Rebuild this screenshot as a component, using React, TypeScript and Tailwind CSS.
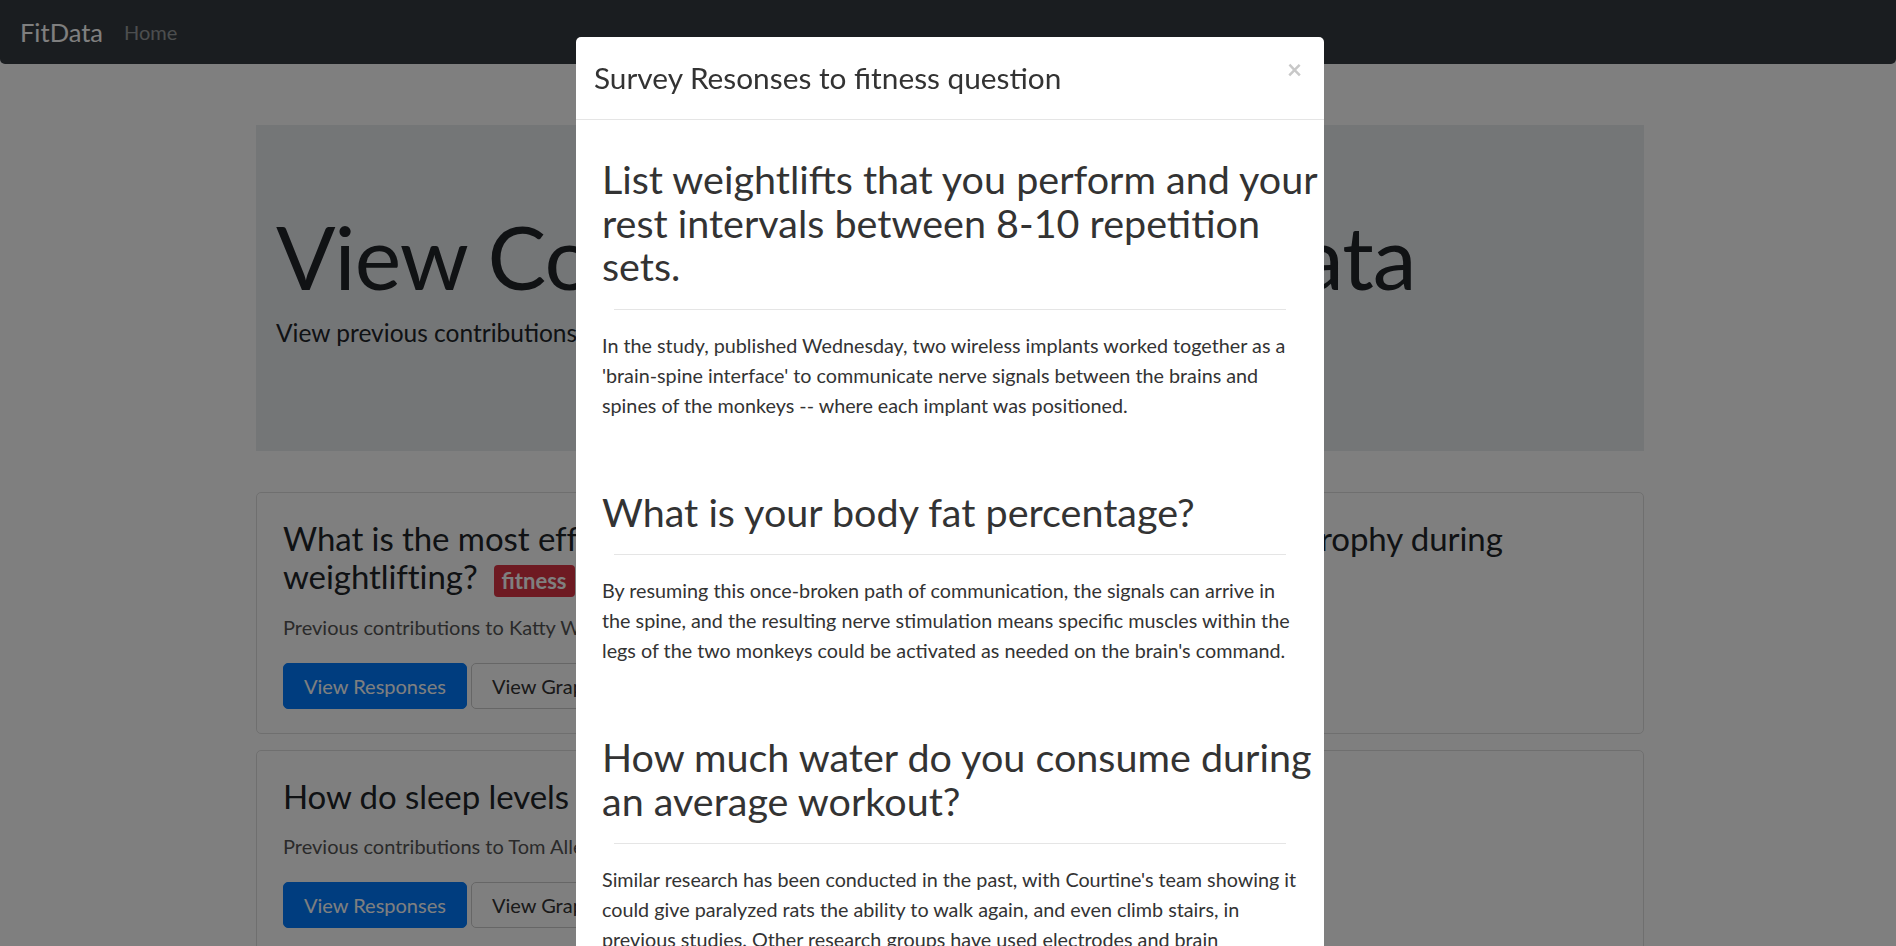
import React from 'react';

const questions = [
  {
    title: 'What is the most effective rest period length to maximize muscle hypertrophy during weightlifting?',
    tag: 'fitness',
    owner: 'Katty Wilson',
  },
  {
    title: 'How do sleep levels affect muscle recovery?',
    tag: null,
    owner: 'Tom Allen',
  },
];

// answers are split where the original page wraps its lines
const responses = [
  {
    q: 'List weightlifts that you perform and your rest intervals between 8-10 repetition sets.',
    a: [
      "In the study, published Wednesday, two wireless implants worked together as a 'brain-spine interface' to communicate nerve signals between the brains and spines of the monkeys -- where each implant was positioned.",
    ],
  },
  {
    q: 'What is your body fat percentage?',
    a: [
      "By resuming this once-broken path of communication, the signals can arrive in the spine, and the resulting nerve stimulation means specific muscles within the legs of the two monkeys could be activated as needed on the brain's command.",
    ],
  },
  {
    q: 'How much water do you consume during an average workout?',
    a: [
      "Similar research has been conducted in the past, with Courtine's team showing it could give paralyzed rats the ability to walk again, and even climb stairs, in previous studies. Other research groups have used electrodes and brain",
      'implants to restore movement in paralyzed limbs.',
    ],
  },
];

const QuestionCard = ({ q }: { q: (typeof questions)[number] }) => (
  <div className="mb-4 rounded-[5px] border border-[#dfdfdf] bg-white px-[26px] pt-[26px] pb-6">
    <h2 className="mb-[17px] text-[33px] leading-[38.4px] tracking-[-0.07px] text-[#212529]">
      {q.title}
      {q.tag && (
        <span className="ml-[16px] inline-block rounded-[4px] bg-[#dc3545] px-[8px] py-[5px] align-baseline text-[22px] leading-none font-bold tracking-normal text-white">
          {q.tag}
        </span>
      )}
    </h2>
    <p className="mb-[22px] text-[20px] leading-[27px] text-[#555]">
      Previous contributions to {q.owner}
    </p>
    <div className="flex gap-[4px]">
      <button className="h-[46px] rounded-[5px] border border-[#007bff] bg-[#007bff] px-[20px] text-[20px] text-white">
        View Responses
      </button>
      <button className="h-[46px] rounded-[5px] border border-[#ccc] bg-white px-[20px] text-[20px] text-[#333]">
        View Graphs
      </button>
    </div>
  </div>
);

export default function App() {
  return (
    <div className="relative min-h-[946px] overflow-hidden bg-white font-['Lato',sans-serif]">
      <nav className="flex h-16 items-center gap-[21px] rounded-b-[5px] bg-[#343a40] pl-[20px]">
        <span className="text-[25.5px] text-white">FitData</span>
        <span className="text-[20px] text-white/50">Home</span>
      </nav>

      <div className="ml-[256px] w-[1388px]">
        <div className="mt-[61px] h-[326px] bg-[#e9ecef] px-[20px] pt-[79px]">
          <h1 className="mb-[5px] text-[88px] leading-[105.6px] tracking-[-1px] text-[#212529]">
            View Community Fitness Data
          </h1>
          <p className="text-[24.5px] leading-[36px] text-[#212529]">
            View previous contributions to survey questions
          </p>
        </div>

        <div className="mt-[41px]">
          {questions.map((q) => (
            <QuestionCard key={q.owner} q={q} />
          ))}
        </div>
      </div>

      {/* modal backdrop + dialog */}
      <div className="fixed inset-0 bg-black/50">
        <div className="absolute top-[37px] left-[576px] w-[748px] rounded-[5px] bg-white text-[#333]">
          <div className="relative flex h-[83px] items-center border-b border-[#e5e5e5] pl-[18px]">
            <h5 className="text-[29.8px] leading-[42px]">Survey Resonses to fitness question</h5>
            <span className="absolute top-[19px] right-[22px] text-[26px] leading-none font-bold text-[#c8c8c8]">
              ×
            </span>
          </div>
          <div className="pt-[37px] pl-[26px]">
            {responses.map((r, i) => (
              <section key={r.q} className={i > 0 ? 'mt-[69px]' : ''}>
                <h2 className="mr-[-10px] text-[39.5px] leading-[43.5px]">{r.q}</h2>
                <hr className="mt-[21px] mr-[38px] ml-[12px] border-[#e5e5e5]" />
                <p className="mt-[21px] w-[698px] text-[19.75px] leading-[30px]">
                  {r.a.map((part, j) => (
                    <React.Fragment key={j}>
                      {j > 0 && <br />}
                      {part}
                    </React.Fragment>
                  ))}
                </p>
              </section>
            ))}
          </div>
        </div>
      </div>
    </div>
  );
}
